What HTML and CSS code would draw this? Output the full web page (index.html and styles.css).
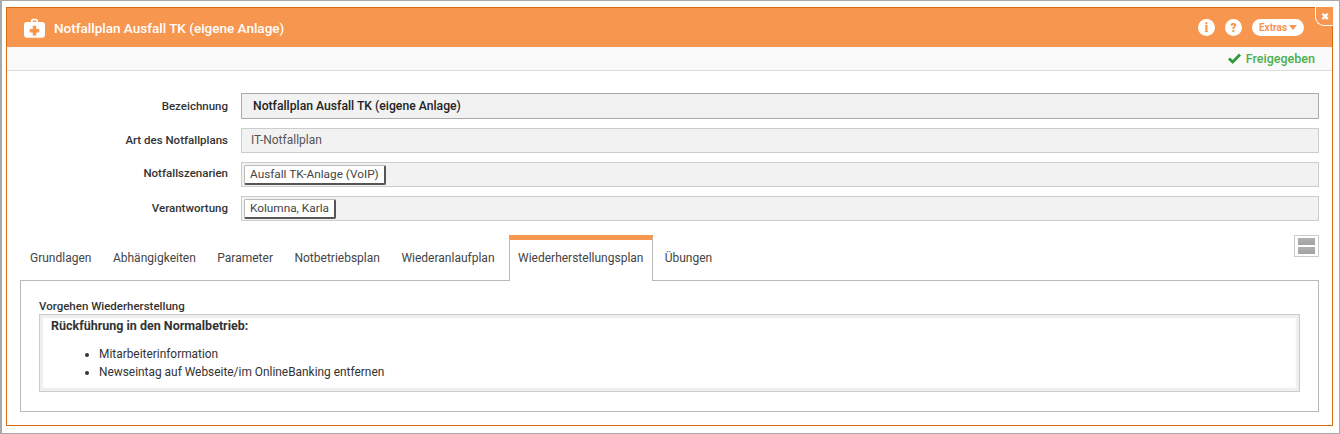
FILE: index.html
```html
<!DOCTYPE html>
<html lang="de">
<head>
<meta charset="utf-8">
<title>Notfallplan</title>
<link rel="stylesheet" href="styles.css">
</head>
<body>
<div class="frame">
  <div class="dialog">
    <header class="head">
      <svg class="case" width="21" height="20" viewBox="0 0 24 22"><path fill="#fff" fill-rule="evenodd" d="M8 4V2.500C8 1.200 9 .3 10.200.3h3.600C15 .3 16 1.200 16 2.500V4h5c1.700 0 3 1.300 3 3v12c0 1.700-1.300 3-3 3H3c-1.700 0-3-1.300-3-3V7c0-1.700 1.300-3 3-3zM10 4h4V2.300h-4zM10 8.500V12H6.500v4H10v3.500h4V16h3.500v-4H14V8.500z"/></svg>
      <h1 class="title">Notfallplan Ausfall TK (eigene Anlage)</h1>
      <div class="tools">
        <span class="round serif">i</span>
        <span class="round">?</span>
        <span class="extras">Extras<i class="caret"></i></span>
      </div>
      <span class="close">✖</span>
    </header>
    <div class="status">
      <svg width="13" height="11" viewBox="0 0 13 11"><path fill="none" stroke="#2e9a3a" stroke-width="2.800" d="M1 5.500l3.700 3.500L12 1.500"/></svg>
      <span>Freigegeben</span>
    </div>
    <form class="form">
      <div class="row first">
        <label>Bezeichnung</label>
        <div class="field strong">Notfallplan Ausfall TK (eigene Anlage)</div>
      </div>
      <div class="row second">
        <label>Art des Notfallplans</label>
        <div class="field plain">IT-Notfallplan</div>
      </div>
      <div class="row third">
        <label>Notfallszenarien</label>
        <div class="field tagged"><span class="tag">Ausfall TK-Anlage (VoIP)</span></div>
      </div>
      <div class="row fourth">
        <label>Verantwortung</label>
        <div class="field tagged"><span class="tag">Kolumna, Karla</span></div>
      </div>
    </form>
    <section class="tabs">
      <nav class="tabbar">
        <a class="tab">Grundlagen</a>
        <a class="tab">Abhängigkeiten</a>
        <a class="tab">Parameter</a>
        <a class="tab">Notbetriebsplan</a>
        <a class="tab">Wiederanlaufplan</a>
        <a class="tab active">Wiederherstellungsplan</a>
        <a class="tab">Übungen</a>
        <span class="toggle"><i></i><i></i></span>
      </nav>
      <div class="panel">
        <div class="caption">Vorgehen Wiederherstellung</div>
        <div class="richtext">
          <strong>Rückführung in den Normalbetrieb:</strong>
          <ul>
            <li>Mitarbeiterinformation</li>
            <li>Newseintag auf Webseite/im OnlineBanking entfernen</li>
          </ul>
        </div>
      </div>
    </section>
  </div>
</div>
</body>
</html>
```
FILE: styles.css
```css
* { box-sizing: border-box; }
html, body { margin: 0; height: 100%; background: #fff; }
body { font-family: Roboto, "Noto Sans", sans-serif; font-size: 12px; color: #333; }
.frame { width: 1340px; height: 434px; border: 1px solid #a9a9a9; border-left-width: 2px; padding: 6px 6px 7px 4px; background: #fff; }
.dialog { position: relative; height: 419px; width: 1327px; border: 1px solid #d9690e; background: #fff; }
.head { height: 39px; background: #f7964f; display: flex; align-items: center; padding-left: 17px; color: #fff; }
.case { margin-right: 9px; }
.title { font-size: 13.500px; font-weight: 500; margin: 0; flex: 1; }
.tools { display: flex; align-items: center; gap: 9px; margin-right: 28px; }
.round { width: 17px; height: 17px; border-radius: 50%; background: #fff; color: #f7964f; font-weight: 900; font-size: 12px; display: flex; align-items: center; justify-content: center; margin-right: 1px; }
.serif { font-family: "Liberation Serif", serif; font-size: 14px; }
.extras { height: 17px; width: 52px; border-radius: 9px; background: #fff; color: #f7964f; font-size: 10px; font-weight: 700; display: flex; align-items: center; justify-content: center; }
.caret { width: 0; height: 0; margin-left: 2px; border: 4px solid transparent; border-top: 5px solid #f7964f; border-bottom: 0; }
.close { position: absolute; right: -1px; top: -1px; width: 18px; height: 19px; background: #f7964f; border-left: 1px solid #fff; border-bottom: 1px solid #fff; border-bottom-left-radius: 9px; color: #fff; font-size: 10px; display: flex; align-items: center; justify-content: center; }
.status { height: 24px; background: #fafafa; border-bottom: 1px solid #ddd; display: flex; align-items: center; justify-content: flex-end; gap: 5px; padding-right: 17px; color: #4caf50; font-weight: 500; font-size: 12.500px; }
.form { display: flex; flex-direction: column; padding: 22px 13px 0 0; }
.row { display: flex; }
.row label { width: 221px; text-align: right; font-weight: 500; font-size: 11.500px; color: #333; padding-top: 5px; flex: none; }
.first label { padding-top: 6px; }
.third label { padding-top: 4px; }
.field { margin-left: 13px; flex: 1; height: 25px; background: #f2f2f2; border: 1px solid #ccc; display: flex; align-items: center; padding-left: 9px; color: #555; }
.plain { padding-bottom: 2px; }
.first { height: 35px; }
.second { height: 34px; }
.third { height: 34px; }
.fourth { height: 39px; }
.strong { height: 26px; border: 1px solid #aaa; font-weight: 500; color: #222; padding-left: 11px; font-size: 12.200px; }
.tagged { padding-left: 2px; align-items: flex-start; padding-top: 2px; }
.tag { height: 20px; padding: 0 5px 1px; background: #fff; border: 1px solid #bbb; border-right: 2px solid #555; border-bottom: 2px solid #555; border-radius: 2px; display: flex; align-items: center; color: #444; font-size: 11.800px; }
.tabs { padding: 0 13px; }
.tabbar { display: flex; height: 45px; position: relative; align-items: stretch; }
.tab { padding: 16px 10.750px 0; color: #444; }
.tab:first-child { padding-left: 10px; }
.tab.active { background: #fff; border: 1px solid #bbb; border-bottom: 0; border-top: 5px solid #f7964f; padding: 11px 8.500px 0; margin: 0 1px -1px 3.250px; position: relative; z-index: 1; }
.toggle { position: absolute; right: 0; top: 0; width: 25px; height: 22px; border: 1px solid #ccc; padding: 2px 3px; display: flex; flex-direction: column; gap: 2px; }
.toggle i { flex: 1; background: linear-gradient(#b0b0b0, #a2a2a2); }
.panel { height: 132px; border: 1px solid #b8b8b8; padding: 16px 18px 0; }
.caption { font-size: 11.500px; font-weight: 500; line-height: 17px; padding-top: 1px; margin-bottom: -1px; }
.richtext { height: 78px; border: 1px solid #ccc; box-shadow: inset 0 0 2px 3px #eee; padding: 3px 11px; color: #333; }
.richtext strong { font-weight: 700; font-size: 12.500px; }
.richtext ul { margin: 12px 0 0; padding-left: 48px; line-height: 18px; font-size: 11.900px; }
```
